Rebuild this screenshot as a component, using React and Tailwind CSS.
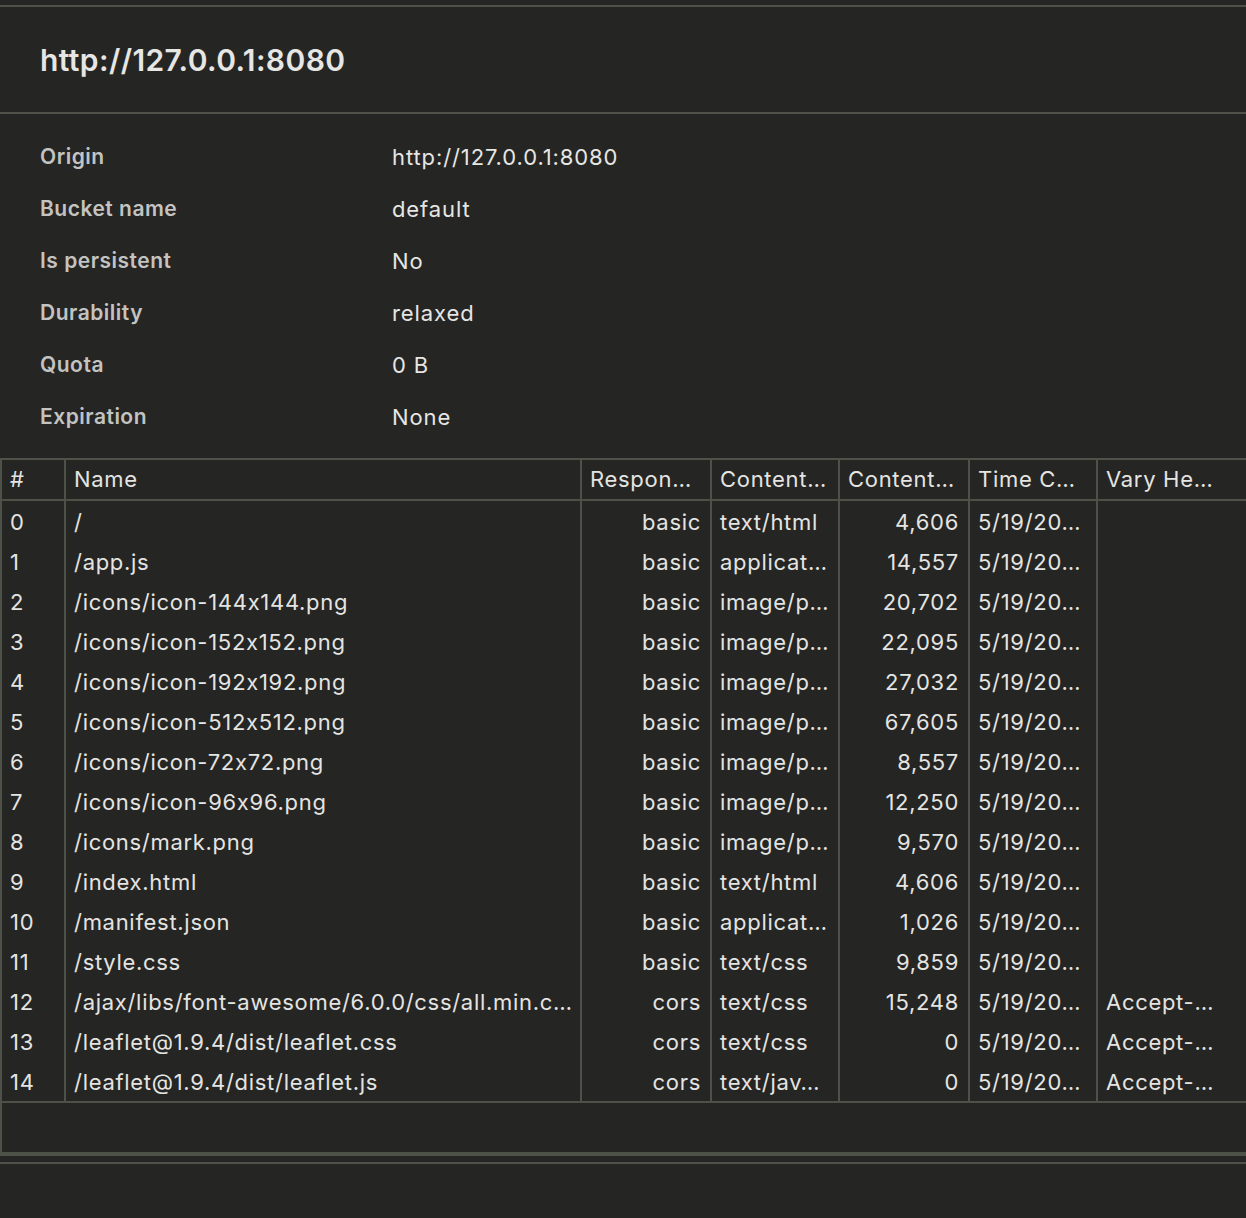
const info = [
  ["Origin", "http://127.0.0.1:8080"],
  ["Bucket name", "default"],
  ["Is persistent", "No"],
  ["Durability", "relaxed"],
  ["Quota", "0 B"],
  ["Expiration", "None"],
];

const rows = [
  ["0", "/", "basic", "text/html", "4,606", "5/19/20…", ""],
  ["1", "/app.js", "basic", "applicat…", "14,557", "5/19/20…", ""],
  ["2", "/icons/icon-144x144.png", "basic", "image/p…", "20,702", "5/19/20…", ""],
  ["3", "/icons/icon-152x152.png", "basic", "image/p…", "22,095", "5/19/20…", ""],
  ["4", "/icons/icon-192x192.png", "basic", "image/p…", "27,032", "5/19/20…", ""],
  ["5", "/icons/icon-512x512.png", "basic", "image/p…", "67,605", "5/19/20…", ""],
  ["6", "/icons/icon-72x72.png", "basic", "image/p…", "8,557", "5/19/20…", ""],
  ["7", "/icons/icon-96x96.png", "basic", "image/p…", "12,250", "5/19/20…", ""],
  ["8", "/icons/mark.png", "basic", "image/p…", "9,570", "5/19/20…", ""],
  ["9", "/index.html", "basic", "text/html", "4,606", "5/19/20…", ""],
  ["10", "/manifest.json", "basic", "applicat…", "1,026", "5/19/20…", ""],
  ["11", "/style.css", "basic", "text/css", "9,859", "5/19/20…", ""],
  ["12", "/ajax/libs/font-awesome/6.0.0/css/all.min.c…", "cors", "text/css", "15,248", "5/19/20…", "Accept-…"],
  ["13", "/leaflet@1.9.4/dist/leaflet.css", "cors", "text/css", "0", "5/19/20…", "Accept-…"],
  ["14", "/leaflet@1.9.4/dist/leaflet.js", "cors", "text/jav…", "0", "5/19/20…", "Accept-…"],
];

// column widths include the 2px separator on the right
const cols = ["w-[64px]", "w-[516px]", "w-[130px]", "w-[128px]", "w-[130px]", "w-[128px]"];

const headers = ["#", "Name", "Respon…", "Content…", "Content…", "Time C…", "Vary He…"];

function Cell({ i, right, children }) {
  const base = "pl-[8px] pr-[9px] whitespace-nowrap overflow-hidden flex items-center";
  if (i === 6) {
    return <div className={`flex-1 ${base}`}>{children}</div>;
  }
  return (
    <div
      className={`${cols[i]} shrink-0 border-r-2 border-[#4d5148] ${base} ${
        right ? "justify-end" : "justify-start"
      }`}
    >
      {children}
    </div>
  );
}

export default function App() {
  return (
    <div
      className="min-h-screen w-full bg-[#252523] pt-[5px] text-[#e4e4e2] overflow-hidden [font-feature-settings:'calt'_0]"
      style={{ fontFamily: "Inter, 'Noto Sans', sans-serif" }}
    >
      <div className="border-t-2 border-b-2 border-[#4d5148] h-[109px] flex items-center px-10">
        <h1 className="text-[30px] font-semibold tracking-[0.4px] text-[#e6e6e4] pt-[2px]">http://127.0.0.1:8080</h1>
      </div>

      <div className="pt-[17px] pb-[15px] px-10">
        {info.map(([k, v]) => (
          <div key={k} className="h-[52px] flex items-center">
            <div className="w-[352px] text-[21px] font-semibold tracking-[0.5px] text-[#c3c3c1]">{k}</div>
            <div className="text-[22px] tracking-[0.9px] text-[#e6e6e4]">{v}</div>
          </div>
        ))}
      </div>

      <div className="border-t-2 border-l-2 border-b-4 border-[#4d5148] text-[22px] tracking-[0.7px]">
        <div className="h-[41px] flex items-stretch border-b-2 border-[#4d5148]">
          {headers.map((h, i) => (
            <Cell key={i} i={i}>
              {h}
            </Cell>
          ))}
        </div>
        <div className="border-b-2 border-[#4d5148]">
          {rows.map((r) => (
            <div key={r[0]} className="h-[40px] flex items-stretch">
              {r.map((c, i) => (
                <Cell key={i} i={i} right={i === 2 || i === 4}>
                  <span className="pt-[2px]">{c}</span>
                </Cell>
              ))}
            </div>
          ))}
        </div>
        <div className="h-[49px]" />
      </div>

      <div className="mt-[6px] border-t-2 border-[#4d5148] h-[60px]" />
    </div>
  );
}
